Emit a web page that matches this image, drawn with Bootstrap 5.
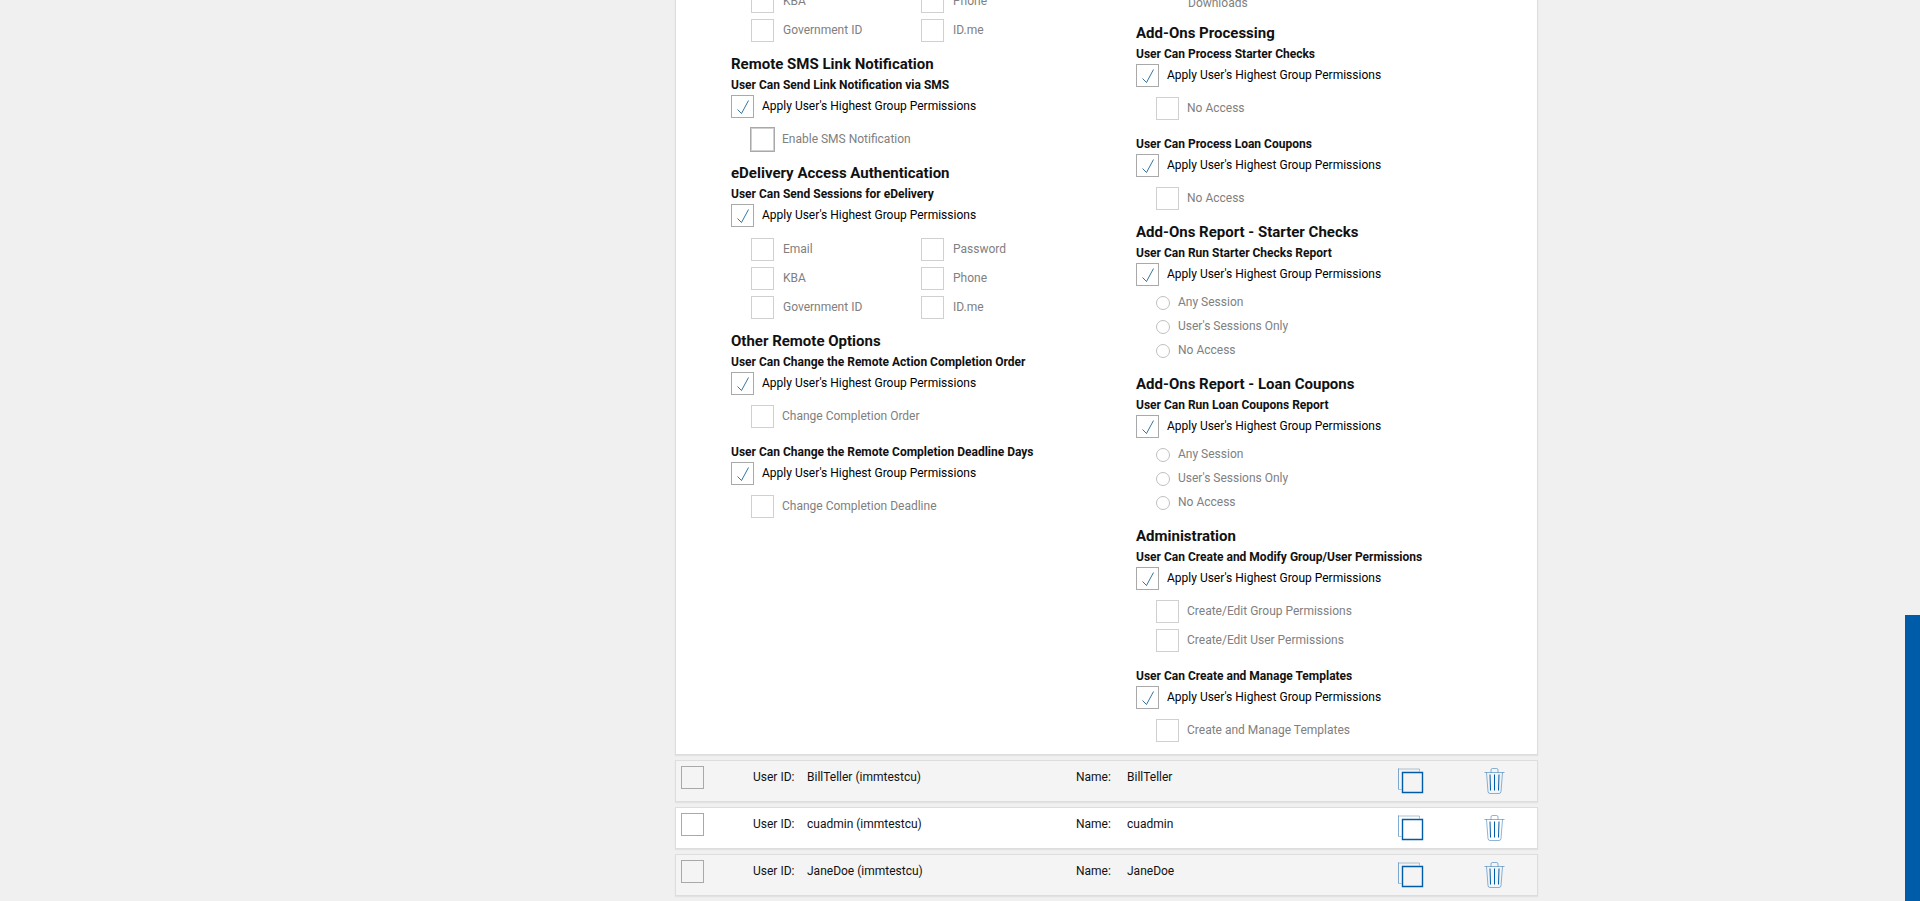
<!DOCTYPE html>
<html lang="en">
<head>
<meta charset="utf-8">
<meta name="viewport" content="width=device-width, initial-scale=1">
<title>User Permissions</title>
<link href="https://cdn.jsdelivr.net/npm/bootstrap@5.3.0/dist/css/bootstrap.min.css" rel="stylesheet">
<style>
  body { background: #f0f0f0; font: 12px/22px Roboto, "Liberation Sans", sans-serif; color: #111; overflow-x: hidden; }
  .page-grid { display: grid; grid-template-columns: 675fr 863fr 382fr; }
  .page-main { grid-column: 2; min-width: 0; }
  .panel { border: 1px solid #ddd; box-shadow: 0 1px 1px #e2e2e2; border-radius: 0; margin-bottom: 5px; background: #fff; }
  .panel-permissions { border-top: 0; margin-top: -10px; padding: 0 0 11px 55px; display: grid; grid-template-columns: 405fr 401fr; }
  .panel-permissions > div + div { padding-top: 4px; }
  h2 { font-size: 15px; line-height: 20px; font-weight: 700; margin: 11px 0 1px; }
  h3 { font-size: 12px; line-height: 20px; font-weight: 700; margin: 0; }
  .perm-group + .perm-group { margin-top: 13px; }
  .apply-row { display: flex; height: 24px; gap: 8px; color: #000; }
  .options { margin: 9px 0 0 20px; display: grid; row-gap: 5px; color: #808080; }
  .options-pairs { margin-top: 10px; grid-template-columns: 170px 1fr; }
  .options-first { margin-top: 0; }
  .options-radio { margin-top: 4px; row-gap: 0; }
  .option { display: flex; height: 24px; gap: 8px; }
  .options-pairs .option { gap: 9px; }
  .options-radio .option { gap: 8px; }
  .download-text { margin-left: 52px; line-height: 18px; color: #808080; }
  .form-check-input { flex: none; margin: 0; float: none; width: 23px; height: 23px; border: 1px solid #a9a9a9; background-color: transparent; }
  .form-check-input[type=checkbox] { border-radius: 0; }
  .form-check-input:checked { background-color: transparent; border-color: #a9a9a9; }
  .form-check-input:checked[type=checkbox] { background-size: 21px 21px; background-image: url("data:image/svg+xml,%3Csvg xmlns='http://www.w3.org/2000/svg' viewBox='0 0 21 21'%3E%3Cpath d='M5.5 13.500 9.500 17.500 16.500 4.500' fill='none' stroke='%23005088' stroke-width='.8'/%3E%3C/svg%3E"); }
  .form-check-input:disabled { opacity: 1; border-color: #d0d0d0; }
  .form-check-input:disabled ~ label { opacity: 1; }
  .form-check-input.is-hovered { outline: 1px solid #a9a9a9; }
  .form-check-input[type=radio] { width: 14px; height: 14px; margin-top: 5px; border-color: #c0c0c0; }
  .user-row { display: grid; grid-template-columns: 77fr 323fr 322fr 86fr 53fr; height: 42px; padding-top: 5px; }
  .user-row:nth-of-type(even) { background: #f4f4f4; }
  .user-row .form-check-input { margin-left: 5px; }
  .user-field { display: flex; }
  .user-field dt { font-weight: 400; width: 54px; }
  .user-field.name-field dt { width: 51px; }
  .user-field dd { margin: 0; }
  .icon-btn { border: 0; background: none; padding: 2px 0 0; width: 26px; height: 30px; display: flex; }
  .icon-btn svg { flex: none; }
  .side-tab { position: fixed; right: 0; bottom: 0; width: 15px; height: 286px; background: #005ba8; }
</style>
</head>
<body>
<svg class="d-none" aria-hidden="true">
  <symbol id="icon-copy" viewBox="0 0 26 26"><path d="M.5 21.500V.5" fill="none" stroke="#005ba8" stroke-opacity=".5"/><path d="M0 1h21.500M21.500 1v2.500M.5 21.500h3" fill="none" stroke="#7d9fae" stroke-opacity=".6"/><path d="M4.500 4.500h20v20h-20z" fill="none" stroke="#005ba8" stroke-width="1.400"/></symbol>
  <symbol id="icon-trash" viewBox="0 0 22 26"><g fill="none" stroke="#005ba8"><path d="M.5 4.500h20M7 4.500V2q0-1.500 1.500-1.500h4Q14 .5 14 2v2.500M2.500 4.500l1.500 19q.2 2 2 2h9q1.800 0 2-2l1.500-19" stroke-opacity=".45"/><path d="M6 6.500l.5 16M10.500 6.500v16M15 6.500l-.5 16"/></g></symbol>
</svg>
<div class="page-grid">
<main class="page-main">
  <section class="panel panel-permissions">
    <div>
      <div class="options options-pairs options-first">
        <div class="option"><input class="form-check-input" type="checkbox" id="a1" disabled><label for="a1">KBA</label></div>
        <div class="option"><input class="form-check-input" type="checkbox" id="a2" disabled><label for="a2">Phone</label></div>
        <div class="option"><input class="form-check-input" type="checkbox" id="a3" disabled><label for="a3">Government ID</label></div>
        <div class="option"><input class="form-check-input" type="checkbox" id="a4" disabled><label for="a4">ID.me</label></div>
      </div>
      <h2>Remote SMS Link Notification</h2>
      <div class="perm-group">
        <h3>User Can Send Link Notification via SMS</h3>
        <div class="apply-row"><input class="form-check-input" type="checkbox" id="b1" checked><label for="b1">Apply User's Highest Group Permissions</label></div>
        <div class="options"><div class="option"><input class="form-check-input is-hovered" type="checkbox" id="b2" disabled><label for="b2">Enable SMS Notification</label></div></div>
      </div>
      <h2>eDelivery Access Authentication</h2>
      <div class="perm-group">
        <h3>User Can Send Sessions for eDelivery</h3>
        <div class="apply-row"><input class="form-check-input" type="checkbox" id="c1" checked><label for="c1">Apply User's Highest Group Permissions</label></div>
        <div class="options options-pairs">
          <div class="option"><input class="form-check-input" type="checkbox" id="c2" disabled><label for="c2">Email</label></div>
          <div class="option"><input class="form-check-input" type="checkbox" id="c3" disabled><label for="c3">Password</label></div>
          <div class="option"><input class="form-check-input" type="checkbox" id="c4" disabled><label for="c4">KBA</label></div>
          <div class="option"><input class="form-check-input" type="checkbox" id="c5" disabled><label for="c5">Phone</label></div>
          <div class="option"><input class="form-check-input" type="checkbox" id="c6" disabled><label for="c6">Government ID</label></div>
          <div class="option"><input class="form-check-input" type="checkbox" id="c7" disabled><label for="c7">ID.me</label></div>
        </div>
      </div>
      <h2>Other Remote Options</h2>
      <div class="perm-group">
        <h3>User Can Change the Remote Action Completion Order</h3>
        <div class="apply-row"><input class="form-check-input" type="checkbox" id="d1" checked><label for="d1">Apply User's Highest Group Permissions</label></div>
        <div class="options"><div class="option"><input class="form-check-input" type="checkbox" id="d2" disabled><label for="d2">Change Completion Order</label></div></div>
      </div>
      <div class="perm-group">
        <h3>User Can Change the Remote Completion Deadline Days</h3>
        <div class="apply-row"><input class="form-check-input" type="checkbox" id="e1" checked><label for="e1">Apply User's Highest Group Permissions</label></div>
        <div class="options"><div class="option"><input class="form-check-input" type="checkbox" id="e2" disabled><label for="e2">Change Completion Deadline</label></div></div>
      </div>
    </div>
    <div>
      <div class="download-text">Downloads</div>
      <h2>Add-Ons Processing</h2>
      <div class="perm-group">
        <h3>User Can Process Starter Checks</h3>
        <div class="apply-row"><input class="form-check-input" type="checkbox" id="f1" checked><label for="f1">Apply User's Highest Group Permissions</label></div>
        <div class="options"><div class="option"><input class="form-check-input" type="checkbox" id="f2" disabled><label for="f2">No Access</label></div></div>
      </div>
      <div class="perm-group">
        <h3>User Can Process Loan Coupons</h3>
        <div class="apply-row"><input class="form-check-input" type="checkbox" id="g1" checked><label for="g1">Apply User's Highest Group Permissions</label></div>
        <div class="options"><div class="option"><input class="form-check-input" type="checkbox" id="g2" disabled><label for="g2">No Access</label></div></div>
      </div>
      <h2>Add-Ons Report - Starter Checks</h2>
      <div class="perm-group">
        <h3>User Can Run Starter Checks Report</h3>
        <div class="apply-row"><input class="form-check-input" type="checkbox" id="h1" checked><label for="h1">Apply User's Highest Group Permissions</label></div>
        <div class="options options-radio">
          <div class="option"><input class="form-check-input" type="radio" name="starter" id="h2" disabled><label for="h2">Any Session</label></div>
          <div class="option"><input class="form-check-input" type="radio" name="starter" id="h3" disabled><label for="h3">User's Sessions Only</label></div>
          <div class="option"><input class="form-check-input" type="radio" name="starter" id="h4" disabled><label for="h4">No Access</label></div>
        </div>
      </div>
      <h2>Add-Ons Report - Loan Coupons</h2>
      <div class="perm-group">
        <h3>User Can Run Loan Coupons Report</h3>
        <div class="apply-row"><input class="form-check-input" type="checkbox" id="i1" checked><label for="i1">Apply User's Highest Group Permissions</label></div>
        <div class="options options-radio">
          <div class="option"><input class="form-check-input" type="radio" name="coupons" id="i2" disabled><label for="i2">Any Session</label></div>
          <div class="option"><input class="form-check-input" type="radio" name="coupons" id="i3" disabled><label for="i3">User's Sessions Only</label></div>
          <div class="option"><input class="form-check-input" type="radio" name="coupons" id="i4" disabled><label for="i4">No Access</label></div>
        </div>
      </div>
      <h2>Administration</h2>
      <div class="perm-group">
        <h3>User Can Create and Modify Group/User Permissions</h3>
        <div class="apply-row"><input class="form-check-input" type="checkbox" id="j1" checked><label for="j1">Apply User's Highest Group Permissions</label></div>
        <div class="options">
          <div class="option"><input class="form-check-input" type="checkbox" id="j2" disabled><label for="j2">Create/Edit Group Permissions</label></div>
          <div class="option"><input class="form-check-input" type="checkbox" id="j3" disabled><label for="j3">Create/Edit User Permissions</label></div>
        </div>
      </div>
      <div class="perm-group">
        <h3>User Can Create and Manage Templates</h3>
        <div class="apply-row"><input class="form-check-input" type="checkbox" id="k1" checked><label for="k1">Apply User's Highest Group Permissions</label></div>
        <div class="options"><div class="option"><input class="form-check-input" type="checkbox" id="k2" disabled><label for="k2">Create and Manage Templates</label></div></div>
      </div>
    </div>
  </section>
  <section class="panel user-row">
    <div><input class="form-check-input" type="checkbox" aria-label="Select BillTeller"></div>
    <dl class="user-field mb-0"><dt>User ID:</dt><dd>BillTeller (immtestcu)</dd></dl>
    <dl class="user-field name-field mb-0"><dt>Name:</dt><dd>BillTeller</dd></dl>
    <button class="icon-btn" type="button" aria-label="Copy"><svg width="26" height="26"><use href="#icon-copy"/></svg></button>
    <button class="icon-btn" type="button" aria-label="Delete"><svg width="22" height="26"><use href="#icon-trash"/></svg></button>
  </section>
  <section class="panel user-row">
    <div><input class="form-check-input" type="checkbox" aria-label="Select cuadmin"></div>
    <dl class="user-field mb-0"><dt>User ID:</dt><dd>cuadmin (immtestcu)</dd></dl>
    <dl class="user-field name-field mb-0"><dt>Name:</dt><dd>cuadmin</dd></dl>
    <button class="icon-btn" type="button" aria-label="Copy"><svg width="26" height="26"><use href="#icon-copy"/></svg></button>
    <button class="icon-btn" type="button" aria-label="Delete"><svg width="22" height="26"><use href="#icon-trash"/></svg></button>
  </section>
  <section class="panel user-row">
    <div><input class="form-check-input" type="checkbox" aria-label="Select JaneDoe"></div>
    <dl class="user-field mb-0"><dt>User ID:</dt><dd>JaneDoe (immtestcu)</dd></dl>
    <dl class="user-field name-field mb-0"><dt>Name:</dt><dd>JaneDoe</dd></dl>
    <button class="icon-btn" type="button" aria-label="Copy"><svg width="26" height="26"><use href="#icon-copy"/></svg></button>
    <button class="icon-btn" type="button" aria-label="Delete"><svg width="22" height="26"><use href="#icon-trash"/></svg></button>
  </section>
</main>
</div>
<div class="side-tab"></div>
<script src="https://cdn.jsdelivr.net/npm/bootstrap@5.3.0/dist/js/bootstrap.bundle.min.js"></script>
</body>
</html>
